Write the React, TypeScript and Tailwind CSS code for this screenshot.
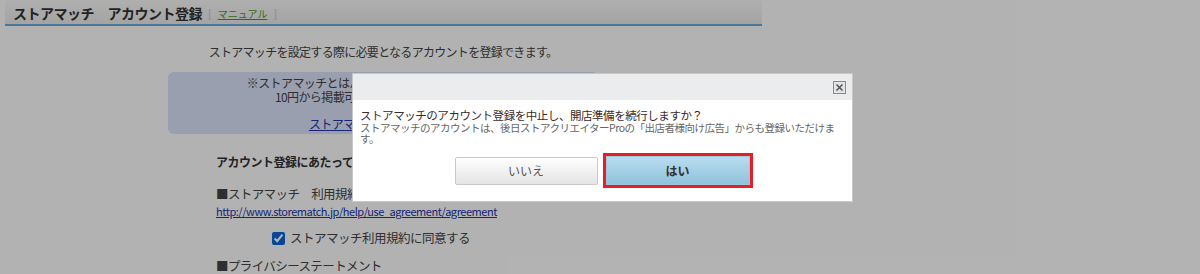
import React from 'react';

const jp = { fontFamily: '"Noto Sans CJK JP", "Noto Sans", sans-serif' };

const CloseIcon: React.FC = () => (
  <svg width="13" height="13" viewBox="0 0 13 13">
    <rect x="0.5" y="0.5" width="12" height="12" fill="#e4e4e4" stroke="#8a8a8a" />
    <path d="M3.5 3.5 L9.5 9.5 M9.5 3.5 L3.5 9.5" stroke="#555" strokeWidth="1.6" />
  </svg>
);

const PageContent: React.FC = () => (
  <div className="text-[#444]">
    <div className="ml-[5px] w-[757px] h-[26px] bg-gradient-to-b from-[#fbfbfb] to-[#ebebea] border-b-2 border-[#6aa9e0] flex items-center pl-[8px] pt-[3px]">
      <h1 className="text-[14px] font-bold text-[#333] tracking-[-0.5px]">ストアマッチ　アカウント登録</h1>
      <span className="ml-[6px] text-[11px] text-[#c4c4c4]">[</span>
      <a className="mx-[6px] text-[10px] text-[#4c9a1e] underline">マニュアル</a>
      <span className="text-[11px] text-[#c4c4c4]">]</span>
    </div>

    <div className="ml-[168px] w-[430px]">
      <p className="mt-[19px] h-[14px] leading-[14px] text-[12px] text-center tracking-[-0.7px]">
        ストアマッチを設定する際に必要となるアカウントを登録できます。
      </p>

      <div className="mt-[13px] h-[62px] rounded-[6px] bg-[#dbe4fb] pt-[4px] text-center text-[12px] leading-[14px] tracking-[-0.6px]">
        <p>※ストアマッチとはパソコン向け広告サービスです。</p>
        <p>10円から掲載可能なクリック型広告です。</p>
        <p className="mt-[13px]">
          <a className="text-[#2236a8] underline">ストアマッチの詳細はこちら</a>
        </p>
      </div>

      <div className="pl-[48px]">
        <p className="mt-[21px] text-[12px] font-bold leading-[14px] tracking-[-0.5px] text-[#333]">
          アカウント登録にあたって
        </p>
        <p className="mt-[18px] text-[12.5px] leading-[14px] tracking-[-0.6px]">■ストアマッチ　利用規約</p>
        <a className="block mt-[3px] text-[11px] leading-[14px] text-[#2236a8] underline tracking-[-0.45px]">
          http://www.storematch.jp/help/use_agreement/agreement
        </a>
        <label className="mt-[13px] ml-[56px] flex items-center gap-[5px] text-[12.5px] leading-[14px] tracking-[-0.5px]">
          <input type="checkbox" defaultChecked className="w-[13px] h-[13px] m-0 accent-[#0b66d6]" />
          ストアマッチ利用規約に同意する
        </label>
        <p className="mt-[14px] text-[12.5px] leading-[14px] tracking-[-0.6px]">■プライバシーステートメント</p>
      </div>
    </div>
  </div>
);

const ConfirmDialog: React.FC = () => (
  <div className="absolute left-[352px] top-[73px] w-[501px] h-[129px] bg-white border border-[#c8c8c8] flex flex-col">
    <div className="h-[26px] bg-[#eaeced] flex items-start justify-end pt-[7px] pr-[6px]">
      <CloseIcon />
    </div>
    <div className="pl-[7px] pt-[9px] whitespace-nowrap">
      <p className="leading-[13px] text-[#3a2a2a] text-[11.5px] tracking-[-0.45px]">
        ストアマッチのアカウント登録を中止し、開店準備を続行しますか？
      </p>
      <p className="leading-[11px] text-[#666] text-[10.5px] tracking-[-0.5px]">
        ストアマッチのアカウントは、後日ストアクリエイターProの「出店者様向け広告」からも登録いただけま
        <br />
        す。
      </p>
    </div>
    <div className="mt-[9px] flex justify-center items-center gap-[5px] pl-[2px]">
      <button className="w-[143px] h-[28px] rounded-[2px] border border-[#c9c9c9] bg-gradient-to-b from-[#ffffff] to-[#e4e4e4] text-[12px] text-[#555]">
        いいえ
      </button>
      <div className="border-[3px] border-[#e81d25]">
        <button className="block w-[144px] h-[29px] border border-[#9cc7dc] bg-gradient-to-b from-[#b9dcef] to-[#8fc3dc] text-[12px] font-bold text-[#333]">
          はい
        </button>
      </div>
    </div>
  </div>
);

export default function App() {
  return (
    <div className="relative w-full h-[274px] overflow-hidden bg-white" style={jp}>
      <PageContent />
      <div className="absolute inset-0 bg-black/30" />
      <ConfirmDialog />
    </div>
  );
}
